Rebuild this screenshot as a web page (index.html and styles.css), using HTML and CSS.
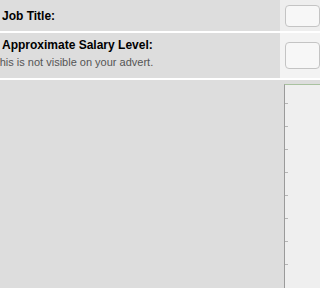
FILE: index.html
```html
<!DOCTYPE html>
<html>
<head>
<meta charset="utf-8">
<link rel="stylesheet" href="styles.css">
</head>
<body>
<div class="form">
  <div class="row row-title">
    <div class="label-cell">
      <div class="label">Job Title:</div>
    </div>
    <div class="field-cell field-light">
      <div class="input input-title"></div>
    </div>
  </div>
  <div class="row row-salary">
    <div class="label-cell">
      <div class="label">Approximate Salary Level:</div>
      <div class="hint">This is not visible on your advert.</div>
    </div>
    <div class="field-cell field-lighter">
      <div class="input input-salary"></div>
    </div>
  </div>
  <div class="row row-desc">
    <div class="label-cell"></div>
    <div class="field-cell">
      <div class="editor">
        <div class="tick"></div>
        <div class="tick"></div>
        <div class="tick"></div>
        <div class="tick"></div>
        <div class="tick"></div>
        <div class="tick"></div>
        <div class="tick"></div>
        <div class="tick"></div>
      </div>
    </div>
  </div>
</div>
</body>
</html>
```

FILE: styles.css
```css
html, body {
  margin: 0;
  padding: 0;
  background: #dddddd;
  font-family: "Liberation Sans", Arial, sans-serif;
  overflow: hidden;
}

.form {
  display: flex;
  flex-direction: column;
  height: 288px;
  overflow: hidden;
}

.row {
  display: grid;
  grid-template-columns: 280px minmax(0, 1fr);
  border-bottom: 2px solid #ffffff;
}

.row-title {
  height: 31px;
}

.row-salary {
  height: 45px;
}

.row-desc {
  flex: 1;
  border-bottom: none;
}

.label-cell {
  background: #dddddd;
  overflow: hidden;
  min-width: 0;
}

.row-title .label-cell {
  padding: 9px 0 0 2px;
}

.row-salary .label-cell {
  padding: 5px 0 0 2px;
}

.label {
  font-size: 12px;
  font-weight: bold;
  line-height: 14px;
  color: #000000;
  white-space: nowrap;
}

.hint {
  margin-top: 4px;
  font-size: 11px;
  line-height: 13px;
  color: #555555;
  white-space: nowrap;
  text-indent: -9px;
}

.field-cell {
  background: #dddddd;
  overflow: hidden;
  min-width: 0;
}

.field-light {
  background: #eeeeee;
  padding: 5px 0 0 5px;
}

.field-lighter {
  background: #f3f3f3;
  padding: 9px 0 0 5px;
}

.input {
  background: #f7f7f7;
  border: 1px solid #c4c4c4;
  border-radius: 4px;
}

.input-title {
  height: 20px;
}

.input-salary {
  height: 25px;
}

.row-desc .field-cell {
  padding: 4px 0 0 4px;
}

.editor {
  height: 100%;
  background: #efefef;
  border-left: 1px solid #9a9a9a;
  border-top: 1px solid #a9c2a0;
  display: flex;
  flex-direction: column;
  gap: 22px;
  padding-top: 18px;
}

.tick {
  width: 3px;
  height: 1px;
  background: #b5b5b5;
}
```
